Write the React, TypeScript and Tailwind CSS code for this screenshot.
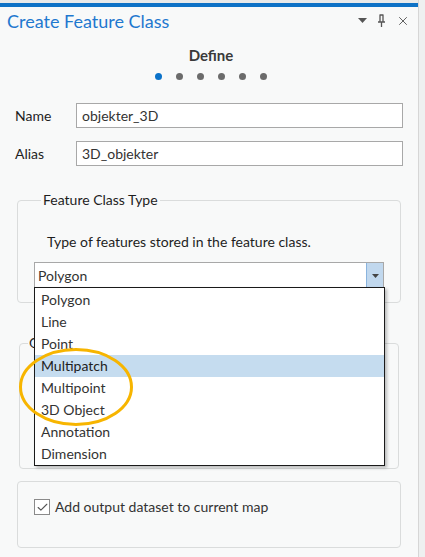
import { useState } from 'react';
import { Check, X } from 'lucide-react';

const geometryTypes = ['Polygon', 'Line', 'Point', 'Multipatch', 'Multipoint', '3D Object', 'Annotation', 'Dimension'];

function Field({ label, value }: { label: string; value: string }) {
    return (
        <div className="flex items-center">
            <label className="w-[76px] shrink-0 pl-[15px] text-[14px] text-[#1e1e1e]">{label}</label>
            <div className="flex-1 h-[25px] bg-white border border-[#a8a8a8] px-[5px] flex items-center text-[14px] text-[#333]">
                {value}
            </div>
        </div>
    );
}

export default function App() {
    const [selected] = useState('Polygon');
    const hovered = 'Multipatch';

    return (
        <div className="w-[425px] h-[557px] bg-[#eef0f0] flex overflow-hidden" style={{ fontFamily: 'Lato, "Open Sans", sans-serif' }}>
            <div className="w-[419px] h-full bg-[#f8f9f9] border-r border-[#d6d6d6] flex flex-col relative">
                <div className="h-[3px] bg-[#e9eaea]" />
                <div className="h-[4px] bg-[#0e72c6]" />

                {/* Pane header */}
                <div className="flex items-center justify-between pl-[7px] pr-[8px] h-[27px]">
                    <h1 className="text-[18px] text-[#1f78cf] leading-none">Create Feature Class</h1>
                    <div className="flex items-center gap-[10px] text-[#555]">
                        <svg width="9" height="5" viewBox="0 0 9 5"><path d="M0 0h9L4.5 5z" fill="#555" /></svg>
                        <svg width="9" height="13" viewBox="0 0 9 13" fill="none" stroke="#555" strokeWidth="1.3">
                            <path d="M2.5 1h4M3 1v7M6 1v7M1 8h7M4.5 8v5" />
                        </svg>
                        <X size={14} strokeWidth={1.6} />
                    </div>
                </div>

                {/* Wizard step */}
                <div className="flex flex-col items-center mt-[11px] pl-[4px]">
                    <p className="text-[15px] font-bold text-[#3a3a3a] leading-[20px]">Define</p>
                    <div className="flex gap-[14px] mt-[8px]">
                        {[0, 1, 2, 3, 4, 5].map((i) => (
                            <span key={i} className={`w-[7px] h-[7px] rounded-full ${i === 0 ? 'bg-[#0b72c9]' : 'bg-[#6b6b6b]'}`} />
                        ))}
                    </div>
                </div>

                <div className="flex flex-col gap-[13px] pr-[15px] mt-[23px]">
                    <Field label="Name" value="objekter_3D" />
                    <Field label="Alias" value="3D_objekter" />
                </div>

                {/* Feature class type group */}
                <fieldset className="mx-[17px] mt-[25px] border border-[#dadcdc] rounded-[4px] pt-[24px] pb-[14px] pl-[16px] pr-[16px] h-[112px]">
                    <legend className="ml-[7px] px-[2px] text-[14px] text-[#1e1e1e] leading-[18px]">Feature Class Type</legend>
                    <p className="pl-[13px] text-[14px] text-[#1e1e1e] leading-[18px]">Type of features stored in the feature class.</p>
                    <div className="mt-[11px] h-[27px] bg-white border border-[#a8a8a8] flex">
                        <span className="flex-1 pl-[3px] flex items-center text-[14px] text-[#333]">{selected}</span>
                        <span className="w-[17px] bg-[#c1d8ee] border-l border-[#8ab4de] flex items-center justify-center">
                            <svg width="7" height="4" viewBox="0 0 7 4"><path d="M0 0h7L3.5 4z" fill="#444" /></svg>
                        </span>
                    </div>
                </fieldset>

                {/* Geometry properties group (covered by the open list) */}
                <fieldset className="mx-[19px] mt-[31px] border border-[#dadcdc] rounded-[4px] h-[135px]">
                    <legend className="ml-[8px] px-[1px] text-[14px] text-[#1e1e1e] leading-[18px]">Geometry Properties</legend>
                </fieldset>

                {/* Output options group */}
                <fieldset className="mx-[17px] mt-[12px] border border-[#dadcdc] rounded-[4px] h-[67px] pt-[17px] pl-[16px]">
                    <label className="flex items-center gap-[5px] text-[14px] text-[#333] leading-[16px]">
                        <span className="w-[16px] h-[16px] border border-[#8a8a8a] bg-white flex items-center justify-center">
                            <Check size={13} strokeWidth={2} className="text-[#555]" />
                        </span>
                        Add output dataset to current map
                    </label>
                </fieldset>

                {/* Open geometry type list */}
                <ul className="absolute left-[34px] top-[287px] w-[351px] h-[179px] bg-white border border-[#1a1a1a] shadow-[2px_2px_3px_rgba(0,0,0,0.25)] flex flex-col py-[1px]">
                    {geometryTypes.map((t) => (
                        <li
                            key={t}
                            className={`h-[22px] flex items-center pl-[6px] text-[14px] ${t === hovered ? 'bg-[#c5dcef] text-[#1e1e1e]' : 'text-[#333]'}`}
                        >
                            {t}
                        </li>
                    ))}
                </ul>

                {/* Highlight around the 3D types */}
                <svg className="absolute left-[18px] top-[347px] pointer-events-none" width="116" height="80" viewBox="0 0 116 80">
                    <ellipse cx="58" cy="40" rx="55.5" ry="37.5" fill="none" stroke="#f7b500" strokeWidth="3" />
                </svg>
            </div>
        </div>
    );
}
